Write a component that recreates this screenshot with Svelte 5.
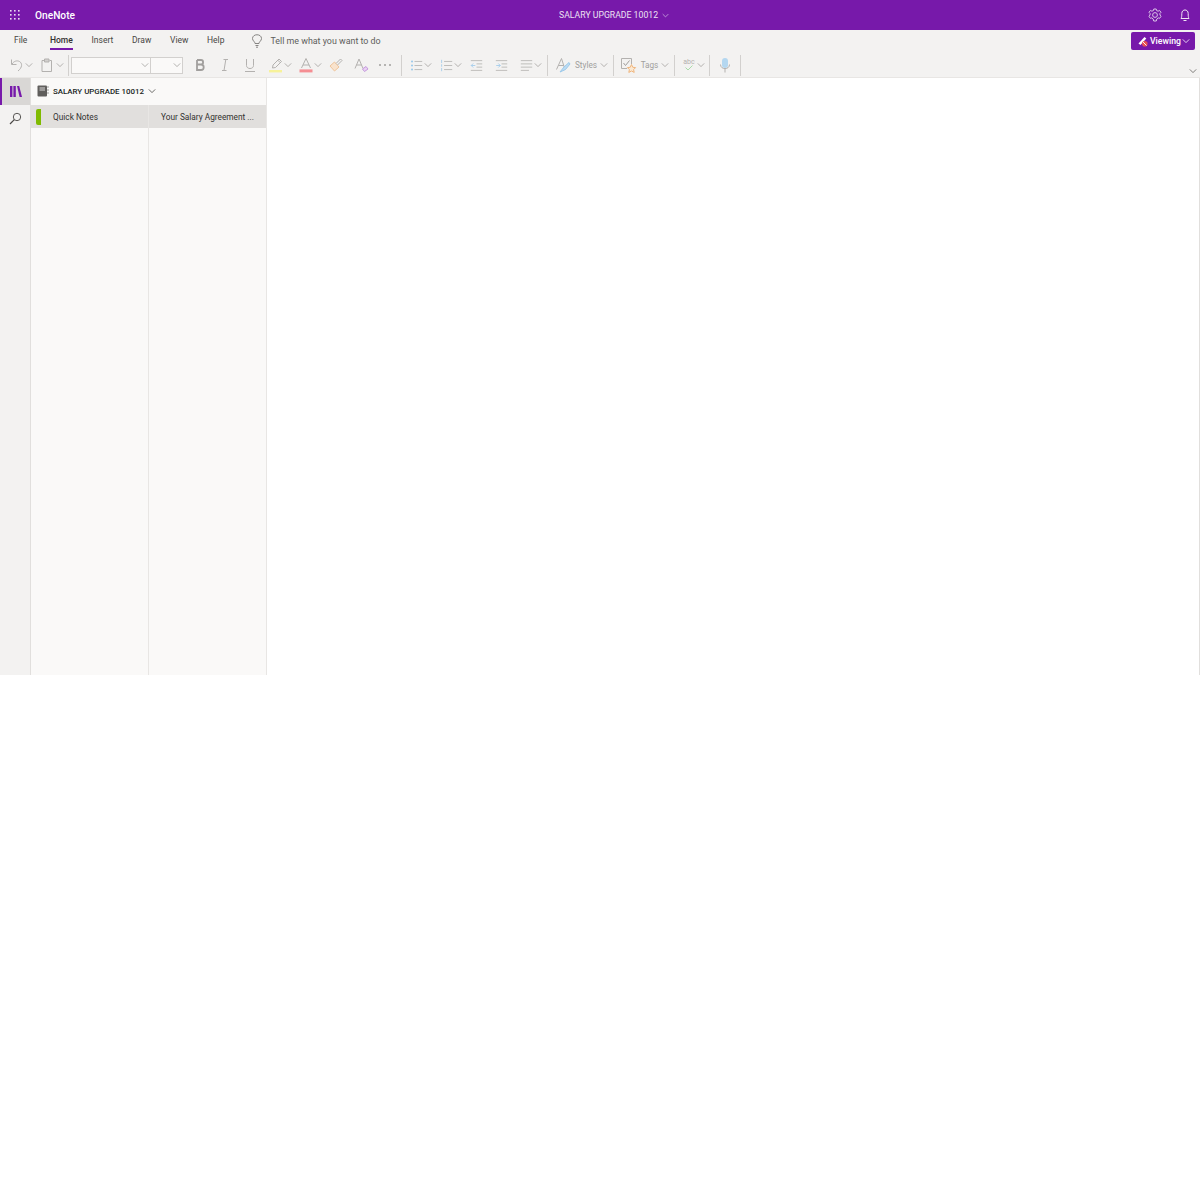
<script lang="ts">
  const tabs = ["Home", "Insert", "Draw", "View", "Help"];
  const narrowIcons = ["bullets", "numbers", "outdent", "indent", "align"];

  // ml = gap before the item, w = width of the item
  const tools = [
    { k: "undo", ml: 9, w: 16 },
    { k: "chev", ml: 0, w: 8 },
    { k: "clip", ml: 6, w: 16 },
    { k: "chev", ml: 1, w: 8 },
    { k: "sep", ml: 4, w: 1 },
    { k: "fontbox", ml: 2, w: 112 },
    { k: "bold", ml: 9, w: 16 },
    { k: "italic", ml: 9, w: 16 },
    { k: "under", ml: 9, w: 16 },
    { k: "marker", ml: 10, w: 16 },
    { k: "chev", ml: 0, w: 8 },
    { k: "color", ml: 6, w: 16 },
    { k: "chev", ml: 0, w: 8 },
    { k: "painter", ml: 6, w: 16 },
    { k: "clear", ml: 9, w: 16 },
    { k: "more", ml: 8, w: 16 },
    { k: "sep", ml: 8, w: 1 },
    { k: "bullets", ml: 6, w: 16 },
    { k: "chev", ml: 0, w: 8 },
    { k: "numbers", ml: 6, w: 16 },
    { k: "chev", ml: 0, w: 8 },
    { k: "outdent", ml: 6, w: 16 },
    { k: "indent", ml: 9, w: 16 },
    { k: "align", ml: 9, w: 16 },
    { k: "chev", ml: 0, w: 8 },
    { k: "sep", ml: 5, w: 1 },
    { k: "styles", ml: 7, w: 16 },
    { k: "text", label: "Styles", ml: 4, w: 22 },
    { k: "chev", ml: 3, w: 8 },
    { k: "sep", ml: 5, w: 1 },
    { k: "tags", ml: 6, w: 16 },
    { k: "text", label: "Tags", ml: 5, w: 17 },
    { k: "chev", ml: 3, w: 8 },
    { k: "sep", ml: 5, w: 1 },
    { k: "spell", ml: 6, w: 16 },
    { k: "chev", ml: 0, w: 8 },
    { k: "sep", ml: 4, w: 1 },
    { k: "mic", ml: 7, w: 16 },
    { k: "sep", ml: 7, w: 1 },
  ];
</script>

{#snippet chevron(size, color)}
  <svg width={size} height={size} viewBox="0 0 8 8" fill="none" stroke={color} stroke-width="0.8">
    <path d="M0.8 2.4 L4 5.6 L7.2 2.4" />
  </svg>
{/snippet}

{#snippet icon(k)}
  <svg
    class="tool"
    width={narrowIcons.includes(k) ? 13 : 16}
    height={narrowIcons.includes(k) ? 13 : 16}
    viewBox="0 0 16 16"
    fill="none"
    stroke="#b3b1af"
    stroke-width="1"
  >
    {#if k === "undo"}
      <path d="M2.5 2.5 V7.5 H7.5 M3 7 C5 4 8 3.2 10.5 4.5 C13.5 6.2 13.5 10.5 9 14" />
    {:else if k === "clip"}
      <path d="M5 3.5 H3 V14.5 H12.5 V3.5 H10.5" />
      <path d="M5.5 2 H10 V5 H5.5 Z" fill="#d2d0ce" />
    {:else if k === "bold"}
      <path d="M5 3 H9 C11.8 3 11.8 7.5 9 7.5 H5 M9 7.5 C12.6 7.5 12.6 13 9 13 H5 V3" stroke-width="1.8" stroke="#a19f9d" />
    {:else if k === "italic"}
      <path d="M6.5 2.5 H11 M5 13.5 H9.5 M8.8 2.5 L7 13.5" />
    {:else if k === "under"}
      <path d="M4.5 2 V8.5 C4.5 12.5 11.5 12.5 11.5 8.5 V2 M3 14.5 H13" />
    {:else if k === "marker"}
      <path d="M4.5 11 L5 8 L11 2 L13.5 4.5 L7.5 10.5 Z M9.8 3.2 L12.3 5.7" />
      <rect x="1" y="13" width="13" height="2.4" fill="#f7f29a" stroke="none" />
    {:else if k === "color"}
      <path d="M3.5 11 L8 1.5 L12.5 11 M5 8 H11" />
      <rect x="1.5" y="12.4" width="13" height="3" fill="#f58e93" stroke="none" />
    {:else if k === "painter"}
      <path d="M2 9 L6.5 5 L11 10 L6.5 14 Z" fill="#f9e3cd" stroke="#efc49b" />
      <path d="M8 6.5 L12.5 2 L14 3.5 L9.5 8" stroke="#b3b1af" />
    {:else if k === "clear"}
      <path d="M2 11.5 L6 2 L10 11.5 M3.5 8 H8.5" />
      <path d="M9.5 12 L13 9.5 L15 12 L11.5 14.5 Z" fill="#e9d2f3" stroke="#c598de" />
    {:else if k === "more"}
      <g fill="#a19f9d" stroke="none">
        <circle cx="3" cy="8" r="1" /><circle cx="8" cy="8" r="1" /><circle cx="13" cy="8" r="1" />
      </g>
    {:else if k === "bullets"}
      <g fill="#9cc9ea" stroke="none">
        <circle cx="2.5" cy="3" r="1.3" /><circle cx="2.5" cy="8" r="1.3" /><circle cx="2.5" cy="13" r="1.3" />
      </g>
      <path d="M5.5 3 H15 M5.5 8 H15 M5.5 13 H15" />
    {:else if k === "numbers"}
      <path d="M2 1 V5 M2 6.5 V9.5 M2 11 V15" stroke="#9cc9ea" />
      <path d="M5 3 H15 M5 8 H15 M5 13 H15" />
    {:else if k === "outdent"}
      <path d="M1 2 H15 M8 6 H15 M8 10 H15 M1 14 H15" />
      <path d="M6.5 8 H1.5 M4 5.5 L1.5 8 L4 10.5" stroke="#9cc9ea" />
    {:else if k === "indent"}
      <path d="M1 2 H15 M8 6 H15 M8 10 H15 M1 14 H15" />
      <path d="M1.5 8 H6.5 M4 5.5 L6.5 8 L4 10.5" stroke="#9cc9ea" />
    {:else if k === "align"}
      <path d="M1 2 H15 M1 6 H15 M1 10 H15 M1 14 H11" />
    {:else if k === "styles"}
      <path d="M1.5 12.5 L6.5 1.5 L10 12.5 M3.5 8.5 H9" />
      <path d="M5 15 L9 10 L14 5.5 L15 7 L10.5 12.5 Z" fill="#bcdcf3" stroke="#9cc9ea" />
    {:else if k === "tags"}
      <path d="M11.5 7 V1.5 H1.5 V11.5 H7" />
      <path d="M3.5 6 L5.5 8.5 L9.5 3.5" stroke="#a19f9d" />
      <path d="M11.5 7.5 L12.8 10.3 L15.6 10.6 L13.6 12.6 L14.2 15.4 L11.5 14 L8.8 15.4 L9.4 12.6 L7.4 10.6 L10.2 10.3 Z" fill="#fbe9d3" stroke="#f0b57c" />
    {:else if k === "spell"}
      <text x="8" y="7" text-anchor="middle" class="abc">abc</text>
      <path d="M4.5 10.5 L7 13 L11.5 8.5" stroke="#a9dca9" />
    {:else if k === "mic"}
      <rect x="5" y="1" width="6" height="10" rx="3" fill="#b4d7f0" stroke="none" />
      <path d="M3.5 7.5 C3.5 13 12.5 13 12.5 7.5 M8 12 V15.5" stroke="#b3b1af" />
    {/if}
  </svg>
{/snippet}

<div class="app">
  <header class="topbar">
    <div class="brand">
      <svg class="waffle" width="10" height="10" viewBox="0 0 10 10" fill="#e9dcf1">
        {#each [1, 5, 9] as y}
          {#each [1, 5, 9] as x}
            <rect x={x - 1} y={y - 1} width="1.6" height="1.6" />
          {/each}
        {/each}
      </svg>
      <span class="appname">OneNote</span>
    </div>
    <div class="title">
      SALARY UPGRADE 10012
      {@render chevron(7, "#d9c3e6")}
    </div>
    <div class="topicons">
      <svg width="14" height="14" viewBox="0 0 14 14" fill="none" stroke="#d9c3e6" stroke-width="1">
        <circle cx="7" cy="7" r="2.4" />
        <path d="M5.8 1 H8.2 L8.6 2.6 L10.1 3.2 L11.5 2.4 L13 4.3 L11.9 5.5 L12 7 L13 8.3 L11.7 10.3 L10.2 9.9 L8.8 11 L8.3 13 H5.7 L5.2 11 L3.8 9.9 L2.3 10.3 L1 8.3 L2 7 L2.1 5.5 L1 4.3 L2.5 2.4 L3.9 3.2 L5.4 2.6 Z" />
      </svg>
      <svg width="14" height="14" viewBox="0 0 14 14" fill="none" stroke="#efe6f4" stroke-width="1">
        <path d="M3 10.5 C3.8 9 3.8 8 3.8 5.5 C3.8 0.8 10.2 0.8 10.2 5.5 C10.2 8 10.2 9 11 10.5 Z" />
        <path d="M5.5 12.5 H8.5" />
      </svg>
    </div>
  </header>

  <section class="ribbon">
    <div class="tabrow">
      <span class="tab file">File</span>
      <nav class="tabs">
        {#each tabs as tab}
          <span class="tab" class:active={tab === "Home"}>{tab}</span>
        {/each}
      </nav>
      <svg class="bulb" width="12" height="14" viewBox="0 0 12 14" fill="none" stroke="#7a7876" stroke-width="0.9">
        <path d="M4 9.5 C4 7.5 1.5 7 1.5 4.5 C1.5 -0.5 10.5 -0.5 10.5 4.5 C10.5 7 8 7.5 8 9.5 Z" />
        <path d="M4.5 11.5 H7.5 M5 13.2 H7" />
      </svg>
      <span class="tell">Tell me what you want to do</span>
      <button class="viewing">
        <svg width="10" height="11" viewBox="0 0 10 11" fill="none">
          <path d="M0.5 7.5 L6.5 1 L8.3 2.6 L2.5 9 Z" fill="#fff" />
          <circle cx="6.8" cy="7.8" r="2.8" fill="#e8504f" />
          <path d="M5 6 L8.6 9.6" stroke="#fff" stroke-width="0.9" />
        </svg>
        <span class="viewlabel">Viewing</span>
        {@render chevron(8, "#fff")}
      </button>
    </div>

    <div class="toolrow">
      {#each tools as t}
        <div class="slot" style="margin-left: {t.ml}px; width: {t.w}px">
          {#if t.k === "chev"}
            {@render chevron(8, "#a19f9d")}
          {:else if t.k === "sep"}
            <div class="sep"></div>
          {:else if t.k === "fontbox"}
            <div class="fontbox">
              <div class="fontname">{@render chevron(8, "#a19f9d")}</div>
              <div class="fontsize">{@render chevron(8, "#a19f9d")}</div>
            </div>
          {:else if t.k === "text"}
            <span class="toollabel">{t.label}</span>
          {:else}
            {@render icon(t.k)}
          {/if}
        </div>
      {/each}
      <div class="collapse">{@render chevron(8, "#605e5c")}</div>
    </div>
  </section>

  <div class="main">
    <aside class="rail">
      <div class="railitem current">
        <svg width="12" height="11" viewBox="0 0 12 11" fill="#7719aa">
          <rect x="0" y="0" width="2.4" height="11" />
          <rect x="3.4" y="0" width="2.4" height="11" />
          <path d="M7 0 H9.2 L12 11 H9.6 Z" />
        </svg>
      </div>
      <div class="railitem">
        <svg width="13" height="13" viewBox="0 0 13 13" fill="none" stroke="#484644" stroke-width="0.9">
          <circle cx="8" cy="5" r="3.7" />
          <path d="M5.3 7.7 L1 12" stroke-width="1.2" />
        </svg>
      </div>
    </aside>

    <div class="nav">
      <div class="nbhead">
        <svg width="12" height="12" viewBox="0 0 12 12">
          <rect x="0.5" y="0.5" width="9.5" height="11" rx="1" fill="#605e5c" />
          <path d="M2.5 3 H8 M2.5 5 H8" stroke="#faf9f8" stroke-width="0.8" />
          <path d="M10.4 2 H11.6 M10.4 5 H11.6 M10.4 8 H11.6" stroke="#605e5c" stroke-width="1.2" />
        </svg>
        <span class="nbname">SALARY UPGRADE 10012</span>
        {@render chevron(8, "#484644")}
      </div>
      <div class="cols">
        <div class="col">
          <div class="row section">
            <span class="swatch"></span>
            <span>Quick Notes</span>
          </div>
        </div>
        <div class="col">
          <div class="row page">Your Salary Agreement ...</div>
        </div>
      </div>
    </div>

    <div class="canvas"></div>
  </div>
</div>

<style>
  :global(body) {
    margin: 0;
    background: #fff;
  }
  .app {
    height: 675px;
    display: flex;
    flex-direction: column;
    font-family: Roboto, "Noto Sans", sans-serif;
    font-size: 9px;
    color: #323130;
  }

  .topbar {
    height: 30px;
    flex: none;
    display: flex;
    align-items: center;
    background: #7719aa;
    color: #fff;
  }
  .brand {
    width: 559px;
    display: flex;
    align-items: center;
    padding-left: 10px;
    box-sizing: border-box;
  }
  .waffle {
    margin-right: 15px;
  }
  .appname {
    font-size: 10.2px;
    font-weight: 500;
  }
  .title {
    display: flex;
    align-items: center;
    gap: 4px;
    font-size: 8.7px;
    color: #ede2f3;
  }
  .topicons {
    margin-left: auto;
    display: flex;
    gap: 16px;
    padding-right: 8px;
  }

  .ribbon {
    height: 48px;
    flex: none;
    box-sizing: border-box;
    background: #f3f2f1;
    border-bottom: 1px solid #e8e6e4;
  }
  .tabrow {
    height: 22px;
    display: flex;
    align-items: center;
    padding-right: 5px;
  }
  .tab {
    align-self: flex-start;
    font-size: 8.5px;
    color: #484644;
    height: 20px;
    line-height: 20px;
    box-sizing: border-box;
  }
  .file {
    width: 36px;
    margin-left: 14px;
  }
  .tabs {
    display: flex;
    gap: 18.7px;
    align-self: flex-start;
  }
  .tab.active {
    font-weight: 500;
    color: #323130;
    border-bottom: 2px solid #7719aa;
  }
  .bulb {
    margin-left: 27px;
  }
  .tell {
    margin-left: 7px;
    font-size: 8.9px;
    color: #605e5c;
  }
  .viewing {
    margin-left: auto;
    width: 64px;
    height: 18px;
    padding: 0 5px 0 7px;
    display: flex;
    align-items: center;
    background: #7719aa;
    border: none;
    border-radius: 2px;
    color: #fff;
    font-family: inherit;
  }
  .viewlabel {
    margin: 0 auto 0 2px;
    font-size: 8.7px;
    font-weight: 500;
  }

  .toolrow {
    height: 26px;
    display: flex;
    align-items: center;
    position: relative;
  }
  .slot {
    flex: none;
    display: flex;
    align-items: center;
    justify-content: center;
    height: 24px;
  }
  .tool {
    overflow: visible;
  }
  .sep {
    width: 1px;
    height: 21px;
    background: #d2d0ce;
  }
  .fontbox {
    width: 100%;
    height: 17px;
    display: flex;
    box-sizing: border-box;
    background: #faf9f8;
    border: 1px solid #d2d0ce;
  }
  .fontname,
  .fontsize {
    display: flex;
    align-items: center;
    justify-content: flex-end;
    padding-right: 1px;
    box-sizing: border-box;
  }
  .fontname {
    width: 79px;
    border-right: 1px solid #d2d0ce;
  }
  .fontsize {
    flex: 1;
  }
  .toollabel {
    font-size: 8.2px;
    color: #a19f9d;
    white-space: nowrap;
  }
  .abc {
    font-family: Roboto, sans-serif;
    font-size: 7px;
    fill: #b3b1af;
    stroke: none;
  }
  .collapse {
    position: absolute;
    right: 3px;
    top: 15px;
    display: flex;
  }

  .main {
    flex: 1;
    display: flex;
    min-height: 0;
  }
  .rail {
    width: 31px;
    flex: none;
    box-sizing: border-box;
    background: #f3f2f1;
    border-right: 1px solid #e1dfdd;
  }
  .railitem {
    height: 27px;
    display: flex;
    align-items: center;
    justify-content: center;
  }
  .railitem.current {
    background: #d9d7d5;
    border-left: 2px solid #7719aa;
    box-sizing: border-box;
  }
  .nav {
    width: 236px;
    flex: none;
    box-sizing: border-box;
    display: flex;
    flex-direction: column;
    background: #faf9f8;
    border-right: 1px solid #e8e6e4;
  }
  .nbhead {
    height: 27px;
    flex: none;
    display: flex;
    align-items: center;
    padding-left: 6px;
    padding-bottom: 1px;
    box-sizing: border-box;
    gap: 4px;
  }
  .nbname {
    font-size: 7.9px;
    font-weight: 500;
    color: #201f1e;
  }
  .cols {
    flex: 1;
    display: flex;
  }
  .col {
    width: 118px;
    box-sizing: border-box;
  }
  .col:first-child {
    border-right: 1px solid #e8e6e4;
  }
  .col:last-child {
    width: 117px;
  }
  .row {
    height: 23px;
    display: flex;
    align-items: center;
    background: #e1dfdd;
    font-size: 8.3px;
    color: #323130;
    white-space: nowrap;
  }
  .section {
    padding-left: 5px;
    gap: 12px;
  }
  .swatch {
    width: 5px;
    height: 16px;
    background: #7fba00;
    border-radius: 2px 0 0 2px;
  }
  .page {
    padding-left: 12px;
  }
  .canvas {
    flex: 1;
    background: #fff;
    border-right: 1px solid #e1dfdd;
  }
</style>
